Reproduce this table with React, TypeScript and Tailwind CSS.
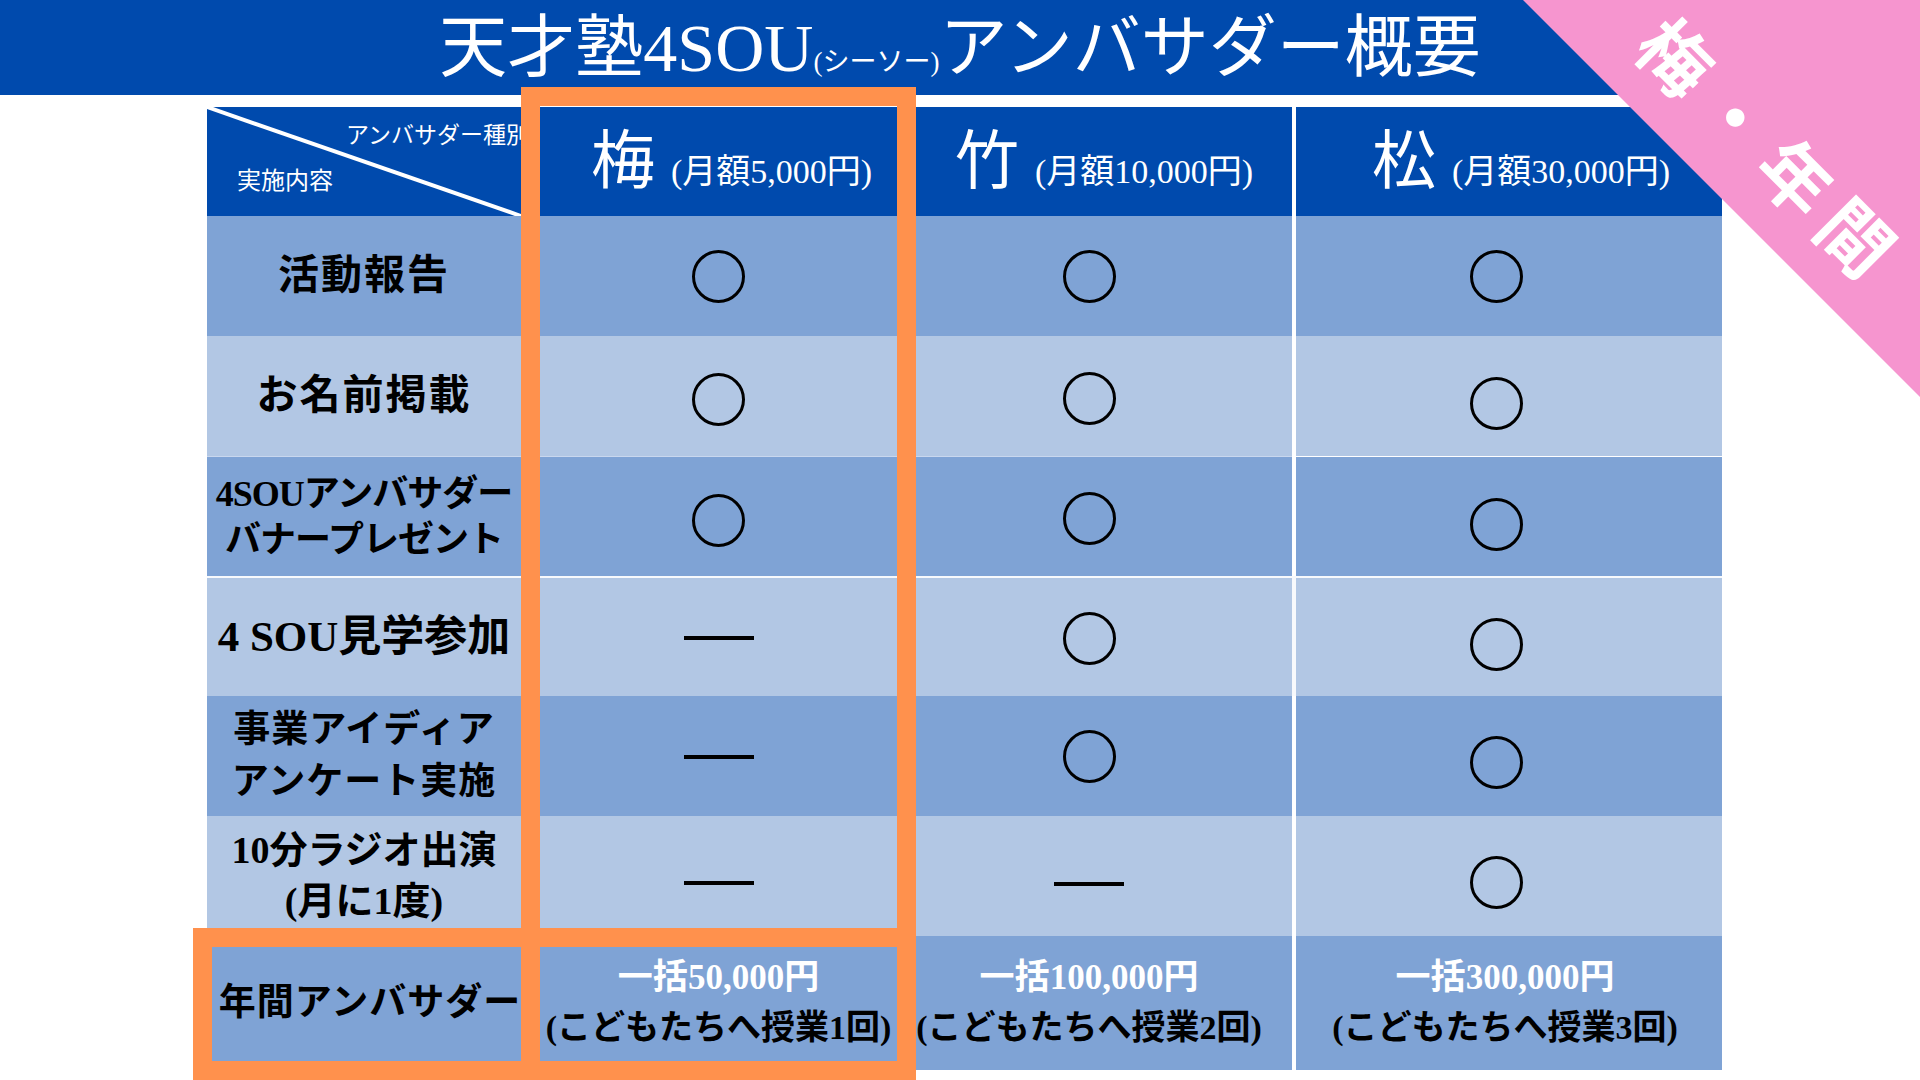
import React from "react";

const dark = "bg-[#7FA3D5]";
const light = "bg-[#B2C7E4]";

type Mark = ["o" | "-", string];

const rows: { bg: string; edge: string; label: React.ReactNode; marks: Mark[] }[] = [
  {
    bg: dark,
    edge: "",
    label: <span className="text-[41px] tracking-[2px]">活動報告</span>,
    marks: [["o", ""], ["o", ""], ["o", ""]],
  },
  {
    bg: light,
    edge: "",
    label: <span className="text-[41px] tracking-[2px]">お名前掲載</span>,
    marks: [["o", "translate-y-[3px]"], ["o", "translate-y-[2px]"], ["o", "translate-y-[7px]"]],
  },
  {
    bg: dark,
    edge: "border-t border-[#C9D7EE]",
    label: (
      <span className="text-[36px] leading-[46px] tracking-[-1px]">
        4SOUアンバサダー
        <br />
        バナープレゼント
      </span>
    ),
    marks: [["o", "translate-y-[4px]"], ["o", "translate-y-[2px]"], ["o", "translate-y-[8px]"]],
  },
  {
    bg: light,
    edge: "border-t-2 border-white/90",
    label: <span className="text-[43px]">4 SOU見学参加</span>,
    marks: [["-", "translate-y-[1px]"], ["o", "translate-y-[1px]"], ["o", "translate-y-[7px]"]],
  },
  {
    bg: dark,
    edge: "",
    label: (
      <span className="text-[37px] leading-[52px] tracking-[1px]">
        事業アイディア
        <br />
        アンケート実施
      </span>
    ),
    marks: [["-", "translate-y-[1px]"], ["o", ""], ["o", "translate-y-[6px]"]],
  },
  {
    bg: light,
    edge: "",
    label: (
      <span className="text-[38px] leading-[51px]">
        10分ラジオ出演
        <br />
        (月に1度)
      </span>
    ),
    marks: [["-", "translate-y-[7px]"], ["-", "translate-y-[8px]"], ["o", "translate-y-[6px]"]],
  },
];

// content of the 竹 / 松 columns sits a little left of centre in the original
const colPad = ["", "pr-[30px]", "border-l-4 border-white pr-[26px]"];

function MarkCell({ mark }: { mark: Mark }) {
  const [kind, shift] = mark;
  if (kind === "o") {
    return <span className={`block h-[53px] w-[53px] rounded-full border-[3px] border-black ${shift}`} />;
  }
  return <span className={`block h-[4px] w-[70px] bg-black ${shift}`} />;
}

function PlanHead({ name, price, className }: { name: string; price: string; className?: string }) {
  return (
    <div className={`flex items-center justify-center bg-[#004AAD] text-white ${className ?? ""}`}>
      <p className="whitespace-nowrap leading-none">
        <span className="text-[64px]">{name}</span>
        <span className="ml-[16px] text-[34px]">(月額{price}円)</span>
      </p>
    </div>
  );
}

function YearCell({ price, times, className }: { price: string; times: string; className?: string }) {
  return (
    <div className={`flex flex-col items-center justify-center ${dark} whitespace-nowrap text-[34px] font-bold leading-[50px] text-black ${className ?? ""}`}>
      <span className="text-[35px] text-white">一括{price}円</span>
      <span>(こどもたちへ授業{times}回)</span>
    </div>
  );
}

export default function App() {
  return (
    <div className="relative h-[1080px] w-[1920px] overflow-hidden bg-white font-['Liberation_Serif','Noto_Sans_CJK_JP',serif]">
      <header className="flex h-[95px] items-center justify-center bg-[#004AAD] text-white">
        <h1 className="whitespace-nowrap text-[68px] font-normal leading-none">
          天才塾4SOU<span className="text-[27px]">(シーソー)</span>アンバサダー概要
        </h1>
      </header>

      <div className="ml-[207px] mt-[12px] grid w-[1515px] grid-cols-[314px_395px_376px_430px] grid-rows-[109px_repeat(6,120px)_134px]">
        {/* header row */}
        <div className="relative bg-[#004AAD] text-white">
          <svg className="absolute inset-0 h-full w-full" viewBox="0 0 314 109" preserveAspectRatio="none">
            <line x1="0" y1="0" x2="314" y2="109" stroke="white" strokeWidth="4" />
          </svg>
          <div className="relative flex flex-col whitespace-nowrap leading-none">
            <span className="ml-[139px] mt-[17px] text-[23px]">アンバサダー種別</span>
            <span className="ml-[30px] mt-[22px] text-[24px]">実施内容</span>
          </div>
        </div>
        <PlanHead name="梅" price="5,000" className="pl-[26px]" />
        <PlanHead name="竹" price="10,000" />
        <PlanHead name="松" price="30,000" className="border-l-4 border-white pl-[24px]" />

        {rows.map((row, i) => (
          <React.Fragment key={i}>
            <div className={`flex items-center justify-center whitespace-nowrap text-center font-bold text-black ${row.bg} ${row.edge}`}>
              {row.label}
            </div>
            {row.marks.map((m, j) => (
              <div key={j} className={`flex items-center justify-center ${row.bg} ${row.edge} ${colPad[j]}`}>
                <MarkCell mark={m} />
              </div>
            ))}
          </React.Fragment>
        ))}

        {/* yearly row */}
        <div className={`flex items-center justify-center whitespace-nowrap ${dark} pl-[12px] text-[37px] font-bold tracking-[1px] text-black`}>
          年間アンバサダー
        </div>
        <YearCell price="50,000" times="1" />
        <YearCell price="100,000" times="2" className="pr-[30px]" />
        <YearCell price="300,000" times="3" className="border-l-4 border-white pr-[8px]" />
      </div>

      {/* orange highlight around 梅 and the yearly row */}
      <div className="absolute left-[521px] top-[87px] h-[993px] w-[395px] border-[19px] border-[#FF914D]" />
      <div className="absolute left-[193px] top-[928px] h-[152px] w-[723px] border-[19px] border-[#FF914D]" />

      {/* pink corner ribbon */}
      <div className="absolute left-[1523px] top-0 h-[397px] w-[397px] bg-[#F695CF] [clip-path:polygon(0_0,100%_0,100%_100%)]" />
      <p className="absolute left-[1763px] top-[150px] -translate-x-1/2 -translate-y-1/2 rotate-45 whitespace-nowrap pl-[13px] text-[72px] font-bold leading-none tracking-[13px] text-white">
        梅・年間
      </p>
    </div>
  );
}
